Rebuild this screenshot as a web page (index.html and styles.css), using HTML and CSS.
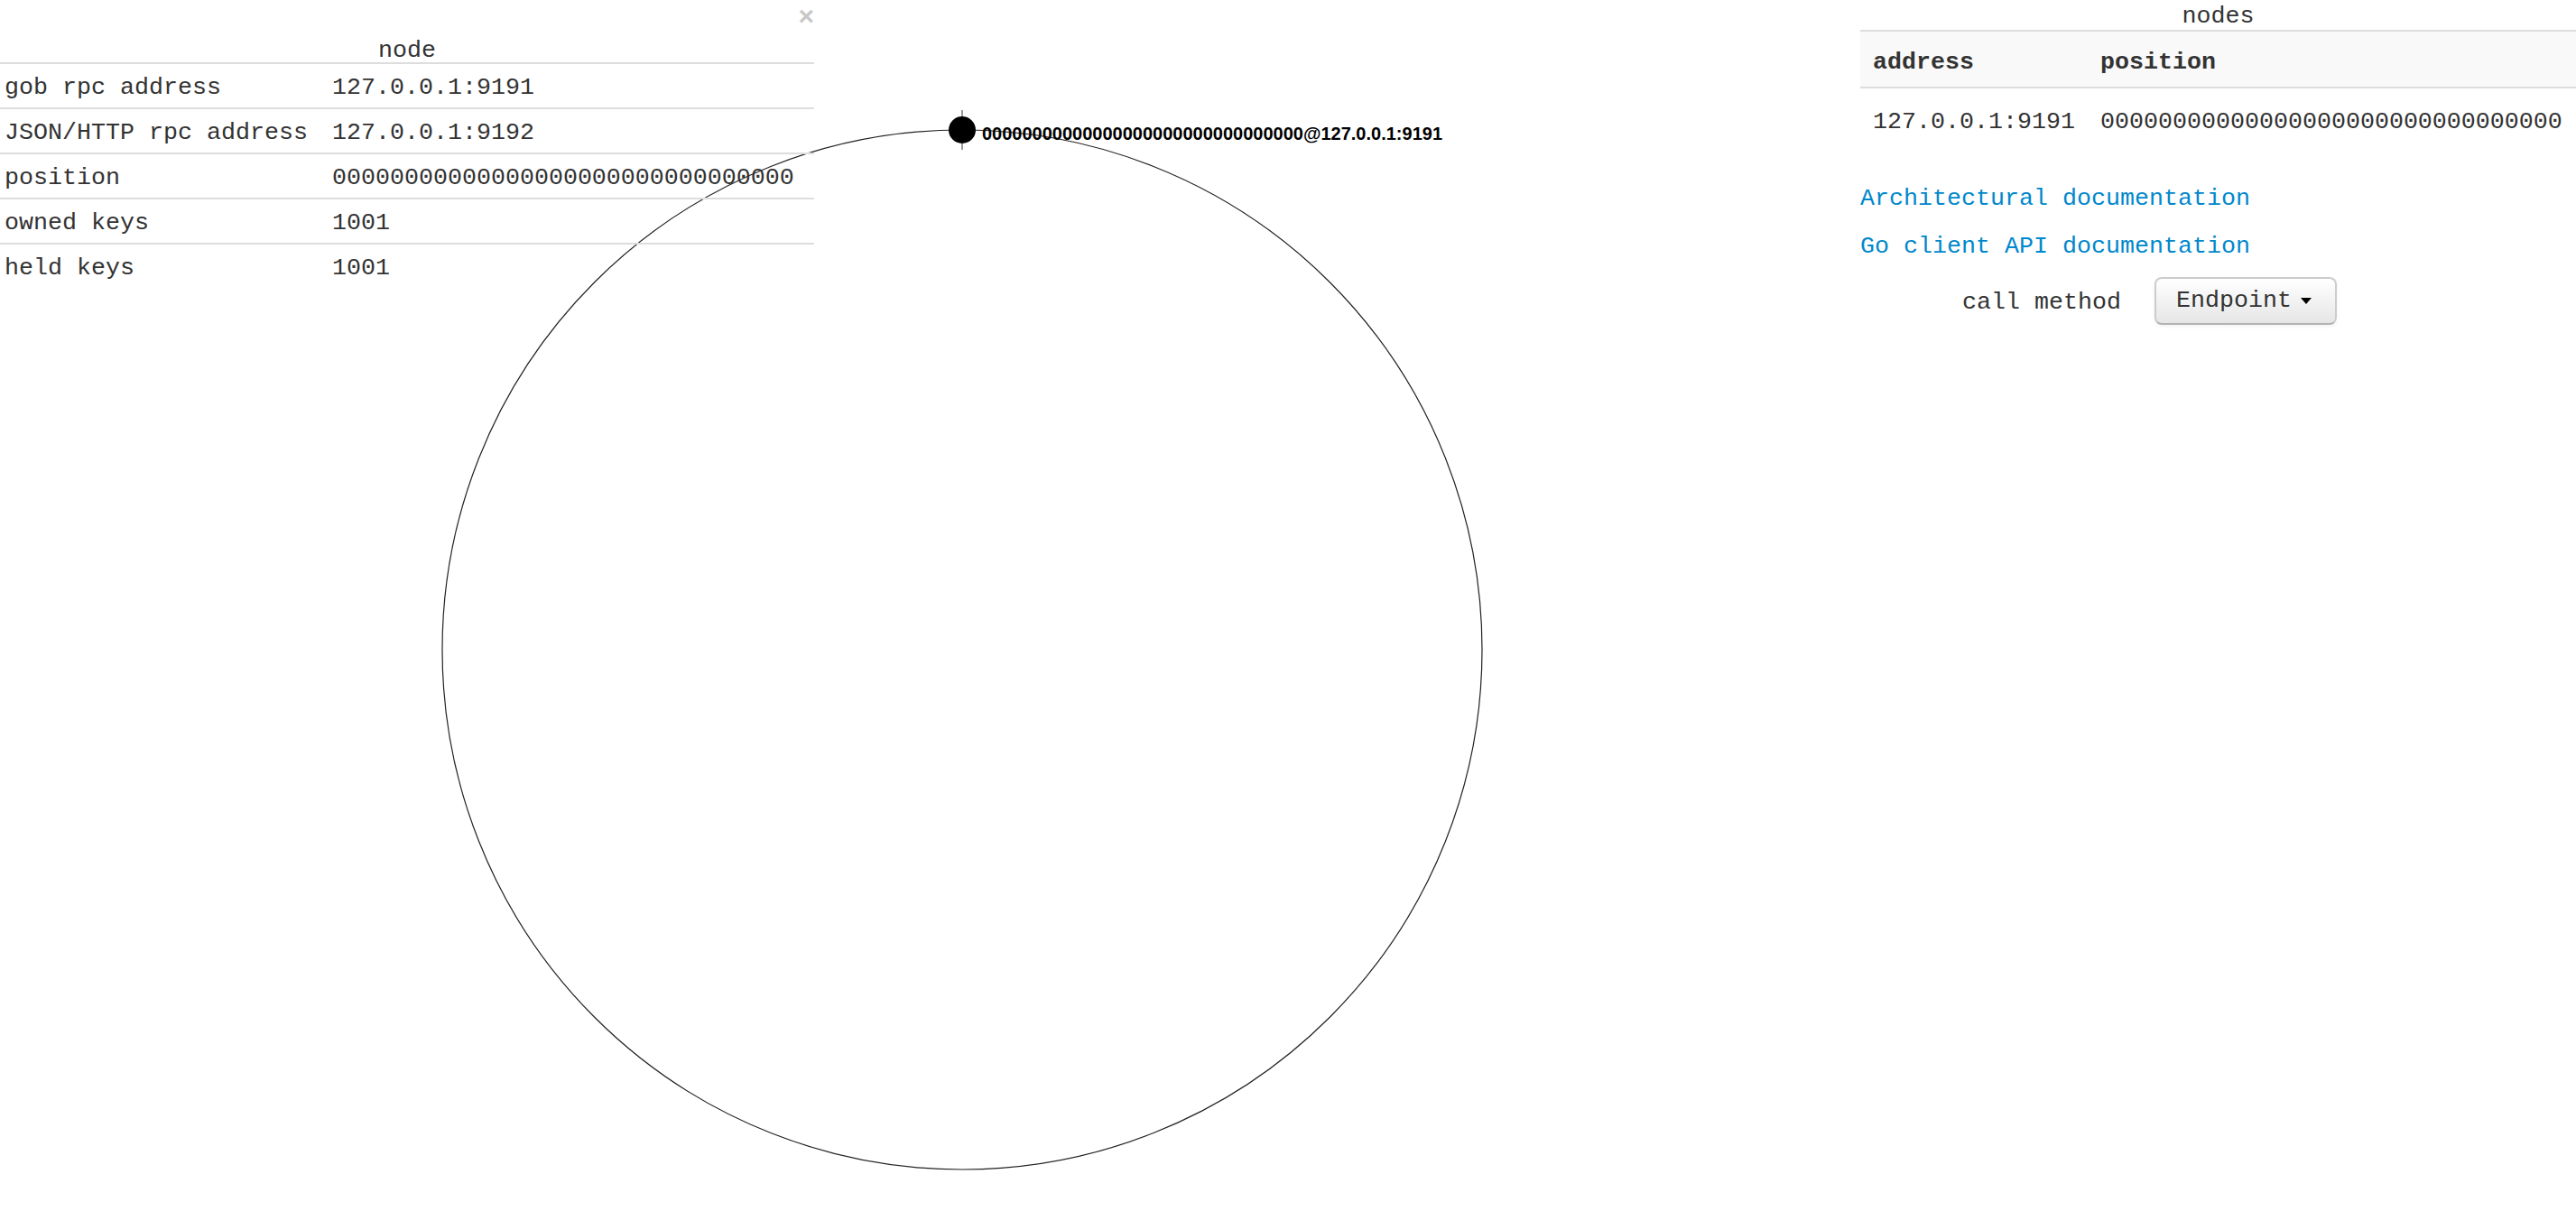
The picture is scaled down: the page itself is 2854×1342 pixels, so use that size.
FILE: index.html
```html
<!DOCTYPE html>
<html>
<head>
<meta charset="utf-8">
<title>ring</title>
<link rel="stylesheet" href="styles.css">
</head>
<body>
<svg class="ring" width="1700" height="1342" viewBox="0 0 1700 1342" xmlns="http://www.w3.org/2000/svg">
  <circle cx="1066" cy="720" r="576" fill="none" stroke="#222" stroke-width="1.2"/>
  <line x1="1066" y1="122" x2="1066" y2="166" stroke="#999" stroke-width="2"/>
  <circle cx="1066" cy="144" r="15" fill="#000"/>
  <text class="ring-label" x="1088" y="155">00000000000000000000000000000000@127.0.0.1:9191</text>
</svg>
<div class="page">
  <section class="node-panel">
    <div class="close-row"><span class="close">×</span></div>
    <div class="caption node-caption">node</div>
    <table class="node-table">
      <tr><td class="key">gob rpc address</td><td>127.0.0.1:9191</td></tr>
      <tr><td class="key">JSON/HTTP rpc address</td><td>127.0.0.1:9192</td></tr>
      <tr><td class="key">position</td><td>00000000000000000000000000000000</td></tr>
      <tr><td class="key">owned keys</td><td>1001</td></tr>
      <tr><td class="key">held keys</td><td>1001</td></tr>
    </table>
  </section>
  <section class="nodes-panel">
    <div class="caption nodes-caption">nodes</div>
    <table class="nodes-table">
      <thead>
        <tr><th>address</th><th>position</th></tr>
      </thead>
      <tbody>
        <tr><td>127.0.0.1:9191</td><td>00000000000000000000000000000000</td></tr>
      </tbody>
    </table>
    <div class="links">
      <a href="#" class="doc-link">Architectural documentation</a>
      <a href="#" class="doc-link">Go client API documentation</a>
    </div>
    <div class="form-row">
      <label class="form-label">call method</label>
      <button class="btn" type="button">Endpoint<span class="caret"></span></button>
    </div>
  </section>
</div>
</body>
</html>
```

FILE: styles.css
```css
html, body {
  margin: 0;
  padding: 0;
  background: #fff;
}

body {
  font-family: "Liberation Mono", "Courier New", monospace;
  font-size: 26.67px;
  color: #333;
  position: relative;
  min-height: 1342px;
  overflow: hidden;
}

.ring {
  position: absolute;
  left: 0;
  top: 0;
  z-index: 0;
}

.ring-label {
  font-family: "Liberation Sans", Arial, sans-serif;
  font-weight: bold;
  font-size: 20px;
  fill: #000;
}

.page {
  position: relative;
  z-index: 1;
  display: flex;
  justify-content: space-between;
  align-items: flex-start;
}

.node-panel {
  width: 902px;
}

.close-row {
  height: 38px;
  text-align: right;
}

.close {
  font-family: "Liberation Sans", Arial, sans-serif;
  font-weight: bold;
  font-size: 30px;
  line-height: 36px;
  color: #c8c8c8;
}

.caption {
  text-align: center;
  color: #333;
}

.node-caption {
  padding-top: 5px;
  line-height: 26px;
}

table {
  border-collapse: collapse;
  border-spacing: 0;
}

.node-table {
  width: 100%;
}

.node-table td {
  border-top: 2px solid #ddd;
  padding: 4px 22px 0 5px;
  line-height: 44px;
  white-space: nowrap;
  text-align: left;
  vertical-align: top;
}

.node-table td.key {
  width: 1px;
}

.nodes-panel {
  width: 793px;
}

.nodes-caption {
  padding-top: 4px;
  line-height: 29px;
}

.nodes-table {
  width: 100%;
  border-top: 2px solid #ddd;
}

.nodes-table th {
  background: #f9f9f9;
  font-weight: bold;
  text-align: left;
  padding: 19px 14px 12px 14px;
  line-height: 30px;
  border-bottom: 2px solid #ddd;
  white-space: nowrap;
}

.nodes-table td {
  padding: 22px 14px 16px 14px;
  line-height: 30px;
  white-space: nowrap;
}

.nodes-table th:first-child,
.nodes-table td:first-child {
  width: 1px;
}

.links {
  margin-top: 39px;
  display: flex;
  flex-direction: column;
  gap: 23px;
}

.doc-link {
  display: block;
  color: #0088cc;
  text-decoration: none;
  line-height: 30px;
}

.form-row {
  margin-top: 19px;
  display: flex;
  align-items: center;
}

.form-label {
  width: 289px;
  text-align: right;
  line-height: 30px;
  padding-top: 3px;
}

.btn {
  margin-left: 37px;
  font-family: "Liberation Mono", "Courier New", monospace;
  font-size: 26.67px;
  color: #333;
  line-height: 33px;
  padding: 8px 26px 8px 22px;
  border: 2px solid #ccc;
  border-bottom-color: #b3b3b3;
  border-radius: 8px;
  background: linear-gradient(#ffffff, #e6e6e6);
  box-shadow: inset 0 2px 0 rgba(255,255,255,.2), 0 2px 4px rgba(0,0,0,.05);
  display: flex;
  align-items: center;
}

.caret {
  display: inline-block;
  width: 0;
  height: 0;
  margin-left: 10px;
  border-top: 7px solid #000;
  border-left: 6px solid transparent;
  border-right: 6px solid transparent;
}
```
